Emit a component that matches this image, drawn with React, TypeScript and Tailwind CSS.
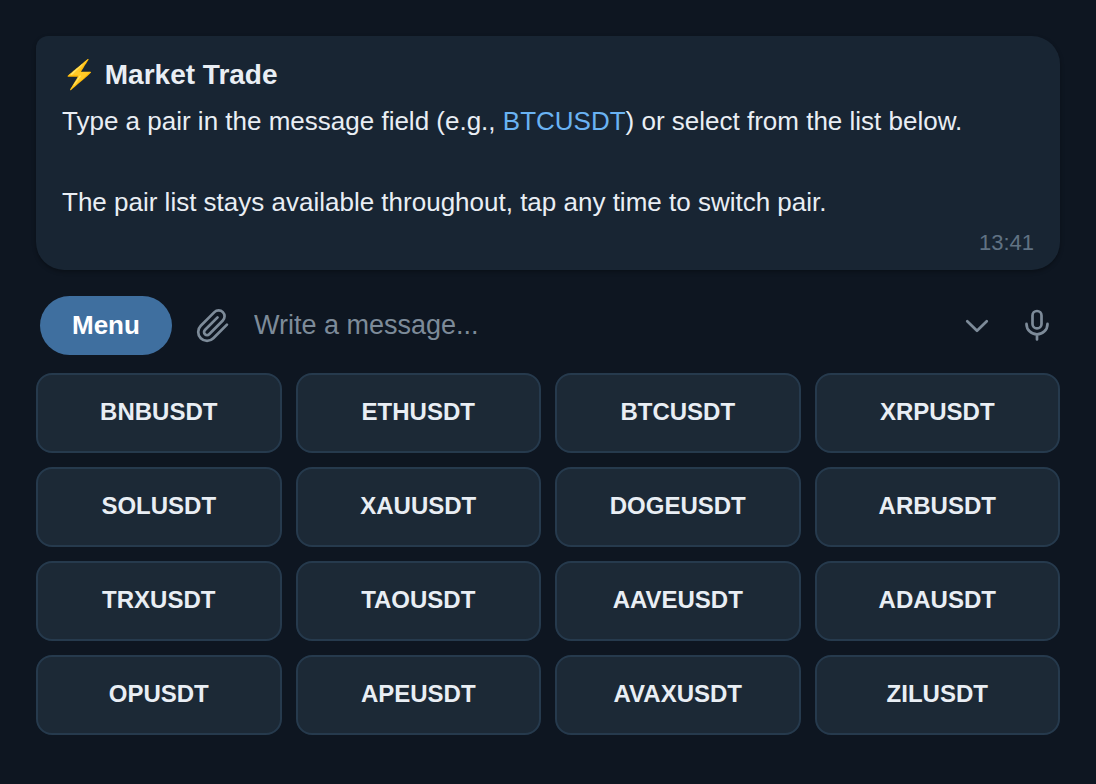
import React from 'react';

const PAIRS = [
  'BNBUSDT', 'ETHUSDT', 'BTCUSDT', 'XRPUSDT',
  'SOLUSDT', 'XAUUSDT', 'DOGEUSDT', 'ARBUSDT',
  'TRXUSDT', 'TAOUSDT', 'AAVEUSDT', 'ADAUSDT',
  'OPUSDT', 'APEUSDT', 'AVAXUSDT', 'ZILUSDT',
];

interface IconButtonProps {
  label: string;
  children: React.ReactNode;
}

const IconButton: React.FC<IconButtonProps> = ({ label, children }) => (
  <button type="button" aria-label={label} className="shrink-0 cursor-pointer p-px text-[#7d8b99]">
    <svg
      className="size-9"
      viewBox="0 0 24 24"
      fill="none"
      stroke="currentColor"
      strokeWidth="1.8"
      strokeLinecap="round"
      strokeLinejoin="round"
    >
      {children}
    </svg>
  </button>
);

const MessageBubble: React.FC = () => (
  <article className="rounded-[28px] rounded-tl-xl bg-[#182533] px-[26px] pt-[18px] pb-[11px] text-[26px] text-[#e9eef4] shadow-[0_2px_4px_rgba(0,0,0,0.3)]">
    <h1 className="mb-1 text-[28px] leading-[42px] font-bold">⚡ Market Trade</h1>
    <p className="leading-[42px]">
      Type a pair in the message field (e.g., <span className="text-[#6ab3f3]">BTCUSDT</span>) or select from the list
      below.
    </p>
    <p className="mt-[39px] leading-[42px]">The pair list stays available throughout, tap any time to switch pair.</p>
    <time className="mt-1 block text-right text-[22px] leading-8 text-[#607283]">13:41</time>
  </article>
);

const Composer: React.FC = () => (
  <form className="flex items-center gap-[22px] px-1" onSubmit={(e) => e.preventDefault()}>
    <button
      type="button"
      className="h-[59px] shrink-0 cursor-pointer rounded-full bg-[#3f6f9f] px-8 text-[26px] font-bold text-white"
    >
      Menu
    </button>
    <IconButton label="Attach file">
      <path d="m21.3 11.1-9.1 9.1a5.9 5.9 0 0 1-8.35-8.35l9.1-9.1a3.95 3.95 0 0 1 5.6 5.6l-9.1 9.1a2 2 0 0 1-2.83-2.83l8.4-8.4" />
    </IconButton>
    <input
      type="text"
      aria-label="Message"
      placeholder="Write a message..."
      className="min-w-0 flex-1 bg-transparent text-[27px] text-[#e9eef4] outline-none placeholder:text-[#7d8b99]"
    />
    <IconButton label="Hide keyboard">
      <path d="m5.5 8.8 6.5 6.4 6.5-6.4" />
    </IconButton>
    <IconButton label="Record voice message">
      <rect x="9" y="2" width="6" height="11.6" rx="3" />
      <path d="M5 10.6a7 7 0 0 0 14 0M12 17.6V21" />
    </IconButton>
  </form>
);

const App: React.FC = () => (
  <main className="min-h-screen bg-[#0e1621] p-9 font-['Liberation_Sans',Arial,sans-serif]">
    <MessageBubble />
    <div className="mt-[26px]">
      <Composer />
    </div>
    <div className="mt-[18px] grid grid-cols-4 gap-[14px]">
      {PAIRS.map((pair) => (
        <button
          key={pair}
          type="button"
          className="h-20 cursor-pointer rounded-2xl border-2 border-[#263a4d] bg-[#1c2936] pb-0.5 text-2xl font-bold text-[#e9eef4]"
        >
          {pair}
        </button>
      ))}
    </div>
  </main>
);

export default App;
